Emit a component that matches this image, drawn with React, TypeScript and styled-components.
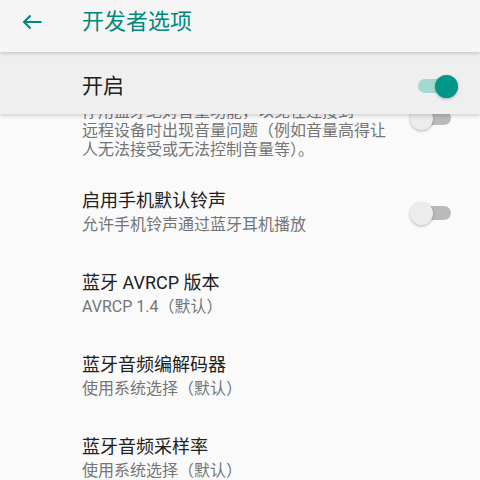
import React from 'react';
import styled, { createGlobalStyle } from 'styled-components';

const GlobalStyle = createGlobalStyle`
  html, body {
    margin: 0;
    padding: 0;
    background: #fafafa;
  }
  * {
    box-sizing: border-box;
  }
`;

const TEAL = '#00897b';

const Page = styled.div`
  width: 480px;
  height: 480px;
  display: flex;
  flex-direction: column;
  overflow: hidden;
  background: #fafafa;
  font-family: Roboto, 'Noto Sans CJK SC', sans-serif;
`;

const AppBar = styled.header`
  position: relative;
  z-index: 3;
  flex: none;
  height: 52px;
  padding: 0 0 9px 22px;
  display: flex;
  align-items: center;
  background: #f5f5f5;
  box-shadow: 0 1px 4px rgba(0, 0, 0, 0.22);
`;

const BackButton = styled.button`
  border: none;
  background: none;
  padding: 0;
  width: 20px;
  height: 16px;
  display: flex;
  color: ${TEAL};
`;

const Title = styled.h1`
  margin: 0 0 0 40px;
  font-size: 22px;
  font-weight: 400;
  color: ${TEAL};
  line-height: 30px;
`;

const MasterBar = styled.div`
  position: relative;
  z-index: 2;
  flex: none;
  height: 62px;
  padding: 2px 22px 0 82px;
  display: flex;
  align-items: center;
  justify-content: space-between;
  background: #efefef;
  box-shadow: 0 2px 4px rgba(0, 0, 0, 0.16);
`;

const MasterLabel = styled.span`
  font-size: 21px;
  color: #212121;
`;

const Scroll = styled.main`
  flex: 1;
  overflow: hidden;
`;

// the list is scrolled a little, so its first row sits under the bar
const List = styled.div<{ $offset: number }>`
  margin-top: ${(p) => -p.$offset}px;
  display: flex;
  flex-direction: column;
`;

const Item = styled.div<{ $tight?: boolean }>`
  display: flex;
  align-items: center;
  gap: 24px;
  padding: 16px 22px ${(p) => (p.$tight ? '12.5px' : '19px')} 82px;
`;

const Texts = styled.div`
  flex: 1;
  min-width: 0;
`;

const ItemTitle = styled.div`
  font-size: 18px;
  line-height: 28px;
  color: #212121;
`;

const Summary = styled.div`
  font-size: 16px;
  line-height: 19px;
  color: #757575;
`;

const SwitchBox = styled.div`
  position: relative;
  flex: none;
  width: 48px;
  height: 24px;
  margin-top: 4px;
`;

const Track = styled.div<{ $on: boolean }>`
  position: absolute;
  left: 8px;
  right: 7px;
  top: 5px;
  height: 14px;
  border-radius: 7px;
  background: ${(p) => (p.$on ? '#a6d8d2' : '#bababa')};
`;

const Thumb = styled.div<{ $on: boolean }>`
  position: absolute;
  top: 1px;
  ${(p) => (p.$on ? 'right: 0;' : 'left: 0;')}
  width: 23px;
  height: 23px;
  border-radius: 50%;
  background: ${(p) => (p.$on ? '#009688' : '#ececec')};
  box-shadow: 0 1px 3px rgba(0, 0, 0, 0.28);
`;

const Switch = ({ on }: { on: boolean }) => (
  <SwitchBox>
    <Track $on={on} />
    <Thumb $on={on} />
  </SwitchBox>
);

interface Pref {
  title?: string;
  summary: string[];
  toggle?: boolean;
  tight?: boolean;
}

const prefs: Pref[] = [
  {
    title: '停用绝对音量功能',
    summary: [
      '停用蓝牙绝对音量功能，以免在连接到',
      '远程设备时出现音量问题（例如音量高得让',
      '人无法接受或无法控制音量等）。',
    ],
    toggle: false,
    tight: true,
  },
  { title: '启用手机默认铃声', summary: ['允许手机铃声通过蓝牙耳机播放'], toggle: false },
  { title: '蓝牙 AVRCP 版本', summary: ['AVRCP 1.4（默认）'] },
  { title: '蓝牙音频编解码器', summary: ['使用系统选择（默认）'] },
  { title: '蓝牙音频采样率', summary: ['使用系统选择（默认）'] },
  { title: '蓝牙音频每样本位数', summary: ['使用系统选择（默认）'] },
];

export default function App() {
  return (
    <>
      <GlobalStyle />
      <Page>
        <AppBar>
          <BackButton aria-label="返回">
            <svg width="20" height="16" viewBox="0 0 20 16" fill="none">
              <path d="M19.5 8H2.2M8.6 1.4L2 8l6.6 6.6" stroke="currentColor" strokeWidth="2.1" />
            </svg>
          </BackButton>
          <Title>开发者选项</Title>
        </AppBar>
        <MasterBar>
          <MasterLabel>开启</MasterLabel>
          <Switch on />
        </MasterBar>
        <Scroll>
          <List $offset={56.5}>
            {prefs.map((p, i) => (
              <Item key={i} $tight={p.tight}>
                <Texts>
                  {p.title && <ItemTitle>{p.title}</ItemTitle>}
                  {p.summary.map((s, j) => (
                    <Summary key={j}>{s}</Summary>
                  ))}
                </Texts>
                {p.toggle !== undefined && <Switch on={p.toggle} />}
              </Item>
            ))}
          </List>
        </Scroll>
      </Page>
    </>
  );
}
